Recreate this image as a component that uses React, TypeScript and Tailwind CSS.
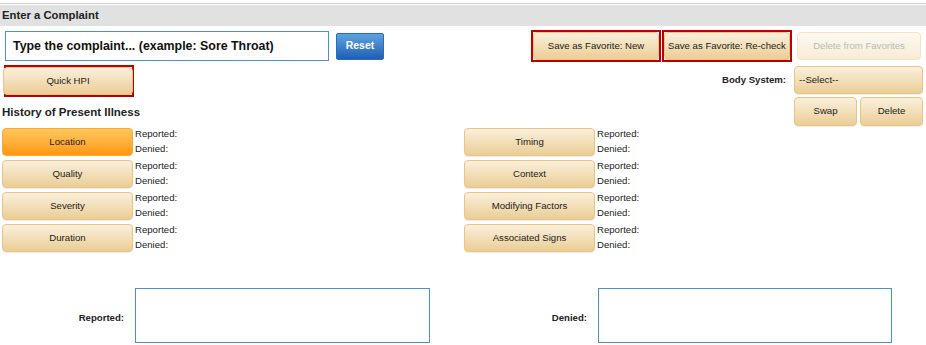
import React from "react";

const tan =
  "flex items-center justify-center rounded-[4px] border border-[#e8c486] bg-gradient-to-b from-[#faf0dd] to-[#ebcd95] text-[9.6px] text-[#222] shadow-[0_1px_1px_rgba(0,0,0,0.08)]";

const leftItems = ["Location", "Quality", "Severity", "Duration"];
const rightItems = ["Timing", "Context", "Modifying Factors", "Associated Signs"];

function HpiRow({ label, active }: { label: string; active?: boolean }) {
  return (
    <div className="flex h-[28px] items-start">
      <button
        className={
          active
            ? "flex h-[28px] w-[131px] items-center justify-center rounded-[4px] border border-[#f5a93a] bg-gradient-to-b from-[#ffc75a] to-[#ff9800] text-[9.6px] text-[#222]"
            : tan + " h-[28px] w-[131px]"
        }
      >
        {label}
      </button>
      <div className="-mt-[2px] ml-[2px] text-[9.6px] leading-[15px] text-[#222]">
        <div>Reported:</div>
        <div>Denied:</div>
      </div>
    </div>
  );
}

export default function App() {
  return (
    <div className="h-[345px] w-[926px] overflow-hidden bg-white font-['Liberation_Sans',Arial,sans-serif] text-[#222]">
      {/* header band */}
      <div className="mt-[3px] h-[1px] bg-[#cfcfcf]" />
      <div className="mt-[1px] flex h-[21px] items-center bg-[#e1e1e1] px-[2px] text-[11.3px] font-bold">
        Enter a Complaint
      </div>

      {/* complaint row */}
      <div className="mt-[4px] flex items-center justify-between pr-[5px]">
        <div className="flex items-center">
          <div className="ml-[5px] flex h-[30px] w-[324px] items-center border border-[#4a8fd8] pl-[7px] text-[12.4px] font-bold text-[#111]">
            Type the complaint... (example: Sore Throat)
          </div>
          <button className="ml-[7px] h-[27px] w-[48px] rounded-[2px] border border-[#2b6cb8] bg-gradient-to-b from-[#5fa2e2] to-[#1d60b3] text-[10.5px] font-bold text-white">
            Reset
          </button>
        </div>
        <div className="flex items-center">
          <div className="h-[32px] w-[130px] border-2 border-[#c00000]">
            <button className={tan + " h-full w-full rounded-[3px]"}>Save as Favorite: New</button>
          </div>
          <div className="ml-[1px] h-[32px] w-[130px] border-2 border-[#c00000]">
            <button className={tan + " h-full w-full rounded-[3px]"}>Save as Favorite: Re-check</button>
          </div>
          <button className="ml-[5px] flex h-[28px] w-[124px] items-center justify-center rounded-[4px] border border-[#f4e4c4] bg-gradient-to-b from-[#fdf9f1] to-[#f7ecd6] text-[9.6px] text-[#b9b9b9]">
            Delete from Favorites
          </button>
        </div>
      </div>

      {/* quick hpi / body system */}
      <div className="mt-[3px] flex justify-between pr-[3px]">
        <div>
          <div className="ml-[4px] h-[32px] w-[130px] border-2 border-[#c00000]">
            <button className={tan + " -ml-[3px] h-full w-[130px] rounded-[3px]"}>Quick HPI</button>
          </div>
          <div className="ml-[2px] mt-[8px] text-[11.5px] font-bold leading-[14px]">
            History of Present Illness
          </div>
        </div>
        <div className="flex flex-col items-end">
          <div className="mt-[1px] flex items-center">
            <span className="mr-[8px] text-[9.6px] font-bold">Body System:</span>
            <div className={tan + " h-[28px] w-[129px] !justify-start pl-[4px]"}>--Select--</div>
          </div>
          <div className="mt-[3px] flex gap-[3px]">
            <button className={tan + " h-[29px] w-[63px]"}>Swap</button>
            <button className={tan + " h-[29px] w-[63px]"}>Delete</button>
          </div>
        </div>
      </div>

      {/* hpi grid */}
      <div className="mt-[2px] grid grid-cols-2">
        <div className="flex flex-col gap-[4px] pl-[2px]">
          {leftItems.map((l, i) => (
            <HpiRow key={l} label={l} active={i === 0} />
          ))}
        </div>
        <div className="flex flex-col gap-[4px] pl-[1px]">
          {rightItems.map((l) => (
            <HpiRow key={l} label={l} />
          ))}
        </div>
      </div>

      {/* reported / denied */}
      <div className="mt-[36px] grid grid-cols-2">
        <div className="flex items-center">
          <span className="mt-[6px] w-[124px] text-right text-[9.6px] font-bold">Reported:</span>
          <div className="ml-[11px] h-[55px] w-[295px] border border-[#4a8fd8]" />
        </div>
        <div className="flex items-center">
          <span className="mt-[6px] w-[124px] text-right text-[9.6px] font-bold">Denied:</span>
          <div className="ml-[11px] h-[55px] w-[294px] border border-[#4a8fd8]" />
        </div>
      </div>
    </div>
  );
}
